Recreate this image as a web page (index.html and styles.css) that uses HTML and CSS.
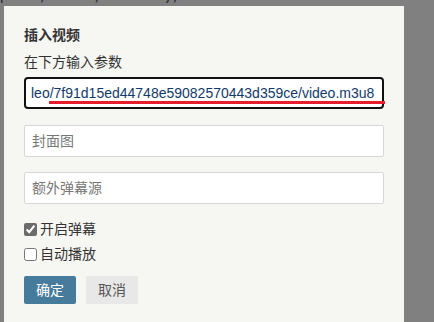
FILE: index.html
```html
<!DOCTYPE html>
<html lang="zh-CN">
<head>
<meta charset="utf-8">
<title>插入视频</title>
<link rel="stylesheet" href="styles.css">
</head>
<body>
<pre class="code-behind">ponse; state; content);</pre>
<div class="dialog">
  <div class="title">插入视频</div>
  <div class="label">在下方输入参数</div>
  <div class="main-field">
    <input class="field field-focus" type="text" value="leo/7f91d15ed44748e59082570443d359ce/video.m3u8">
    <span class="mark-line"></span>
  </div>
  <input class="field field-cover" type="text" placeholder="封面图">
  <input class="field field-danmaku" type="text" placeholder="额外弹幕源">
  <label class="check-row check-first"><input type="checkbox" checked><span>开启弹幕</span></label>
  <label class="check-row check-second"><input type="checkbox"><span>自动播放</span></label>
  <div class="actions">
    <button class="btn btn-ok" type="button">确定</button>
    <button class="btn btn-cancel" type="button">取消</button>
  </div>
</div>
</body>
</html>
```
FILE: styles.css
```css
html, body {
  margin: 0;
  padding: 0;
}
body {
  width: 434px;
  height: 322px;
  overflow: hidden;
  background: #808080;
  font-family: "Liberation Sans", "Noto Sans CJK SC", sans-serif;
  font-size: 14px;
  color: #333;
}
.code-behind {
  margin: -11px 0 0 0;
  height: 17px;
  font-family: "Liberation Mono", monospace;
  font-size: 13px;
  line-height: 15px;
  color: #1c1c28;
  white-space: pre;
}
.dialog {
  margin-left: 4px;
  width: 400px;
  height: 330px;
  box-sizing: border-box;
  background: #f6f6f2;
  padding: 19px 20px 20px;
  display: flex;
  flex-direction: column;
}
.title {
  font-weight: bold;
  line-height: 20px;
  color: #333;
  margin-bottom: 7px;
}
.label {
  line-height: 20px;
  color: #333;
  margin-bottom: 5px;
}
.main-field {
  position: relative;
  margin-bottom: 16px;
}
.field {
  display: block;
  width: 360px;
  height: 32px;
  box-sizing: border-box;
  margin: 0;
  background: #fff;
  border: 1px solid #d7d7d7;
  border-radius: 2px;
  padding: 0 7px;
  font-family: "Liberation Sans", "Noto Sans CJK SC", sans-serif;
  font-size: 14px;
  color: #333;
  outline: none;
}
.field::placeholder {
  color: #777;
}
.field-focus {
  border: 2px solid #111;
  border-radius: 4px;
  padding: 0 5px;
  color: #123a6b;
}
.mark-line {
  position: absolute;
  left: 25px;
  top: 24px;
  width: 336px;
  height: 3px;
  background: #e81d2b;
}
.field-cover {
  margin-bottom: 15px;
}
.check-row {
  display: flex;
  align-items: center;
  height: 20px;
  line-height: 20px;
  color: #333;
}
.check-row input {
  margin: 0 3px 0 0;
  width: 13px;
  height: 13px;
  accent-color: #6b6b6b;
}
.check-first {
  margin-top: 15px;
  margin-bottom: 5px;
}
.actions {
  margin-top: 12px;
  display: flex;
  gap: 10px;
}
.btn {
  width: 52px;
  height: 28px;
  padding: 0;
  border: none;
  border-radius: 2px;
  font-family: "Liberation Sans", "Noto Sans CJK SC", sans-serif;
  font-size: 14px;
  line-height: 28px;
}
.btn-ok {
  background: #477b9c;
  color: #fff;
}
.btn-cancel {
  background: #e8e8e8;
  color: #555;
}
```
